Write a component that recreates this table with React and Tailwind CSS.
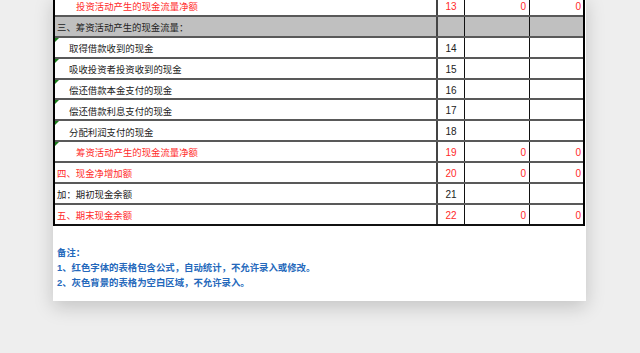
import React from "react";

const rows = [
  { label: "投资活动产生的现金流量净额", no: "13", indent: "pl-[21px]", red: true, a: "0", b: "0" },
  { label: "三、筹资活动产生的现金流量：", header: true },
  { label: "取得借款收到的现金", no: "14", indent: "pl-[14px]", mark: true },
  { label: "吸收投资者投资收到的现金", no: "15", indent: "pl-[14px]", mark: true },
  { label: "偿还借款本金支付的现金", no: "16", indent: "pl-[14px]", mark: true },
  { label: "偿还借款利息支付的现金", no: "17", indent: "pl-[14px]", mark: true },
  { label: "分配利润支付的现金", no: "18", indent: "pl-[14px]", mark: true },
  { label: "筹资活动产生的现金流量净额", no: "19", indent: "pl-[21px]", red: true, mark: true, a: "0", b: "0" },
  { label: "四、现金净增加额", no: "20", indent: "pl-[2px]", red: true, a: "0", b: "0" },
  { label: "加：期初现金余额", no: "21", indent: "pl-[2px]" },
  { label: "五、期末现金余额", no: "22", indent: "pl-[2px]", red: true, a: "0", b: "0", last: true },
];

const Row = ({ row }) => {
  const color = row.red ? "text-[#ff2a2a]" : "text-[#222]";
  const bg = row.header ? "bg-[#c0c0c0]" : "bg-white";
  const line = row.last ? "border-b-2 border-[#111]" : "border-b-2 border-[#595959]";
  return (
    <div className={`flex h-[20.9px] ${line} ${bg}`}>
      <div className={`relative w-[383px] border-r-2 border-[#444] flex items-center pt-[3px] ${row.header ? "pl-[2px] text-[#222]" : `${row.indent} ${color}`}`}>
        {row.mark && (
          <span className="absolute left-0 top-0 w-0 h-0 border-t-[4px] border-t-[#1b7d1b] border-r-[4px] border-r-transparent" />
        )}
        {row.label}
      </div>
      <div className={`w-[27px] border-r border-[#111] flex items-center justify-center pt-[3px] text-[10px] ${color}`}>
        {row.no}
      </div>
      <div className={`w-[65px] border-r border-[#111] flex items-center justify-end pr-[3px] pt-[3px] text-[10px] ${color}`}>
        {row.a}
      </div>
      <div className={`flex-1 flex items-center justify-end pr-[2px] pt-[3px] text-[10px] ${color}`}>
        {row.b}
      </div>
    </div>
  );
};

export default function App() {
  return (
    <div
      className="h-[353px] w-[640px] overflow-hidden bg-[#eeeeee]"
      style={{ fontFamily: '"Liberation Sans", "Noto Sans CJK SC", sans-serif' }}
    >
      <div className="ml-[53px] -mt-[4px] w-[533px] bg-white pb-[11px] shadow-[0_6px_18px_rgba(0,0,0,0.18)]">
        <div className="w-[532px] border-l-2 border-r-2 border-black text-[9.4px] leading-none">
          {rows.map((row, i) => (
            <Row key={i} row={row} />
          ))}
        </div>
        <div className="mt-[19px] pl-[4px] text-[9.4px] font-bold leading-[15px] text-[#2468bb]">
          <p>备注：</p>
          <p>1、红色字体的表格包含公式，自动统计，不允许录入或修改。</p>
          <p>2、灰色背景的表格为空白区域，不允许录入。</p>
        </div>
      </div>
    </div>
  );
}
